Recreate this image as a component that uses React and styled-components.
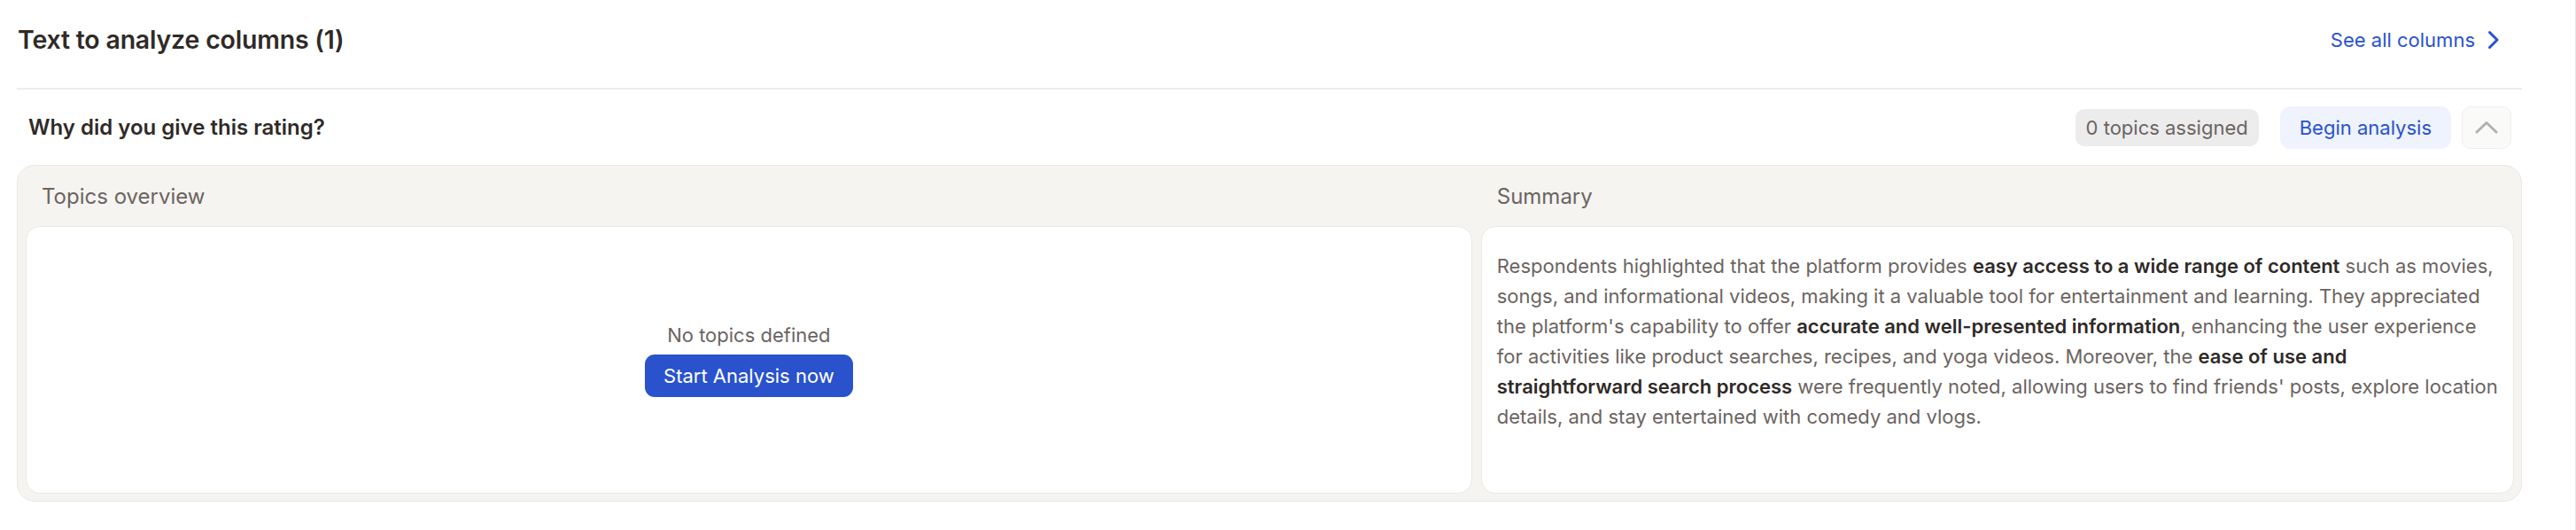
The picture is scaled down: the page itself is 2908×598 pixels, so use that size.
import React from "react";
import styled, { createGlobalStyle } from "styled-components";

const GlobalStyle = createGlobalStyle`
  body {
    margin: 0;
    background: #ffffff;
    font-family: Inter, "Noto Sans", sans-serif;
    color: #2f2a27;
  }
`;

const Page = styled.div`
  width: 2908px;
  height: 598px;
  box-sizing: border-box;
  padding: 0 60px 0 19px;
  border-right: 1px solid #e6e6e6;
`;

const Header = styled.div`
  height: 89px;
  padding: 0 25px 10px 1px;
  display: flex;
  align-items: center;
  justify-content: space-between;
  border-bottom: 2px solid #efece8;
`;

const Title = styled.h2`
  margin: 0;
  font-size: 28.5px;
  font-weight: 600;
  color: #2f2a27;
  letter-spacing: -0.2px;
`;

const LinkButton = styled.a`
  display: flex;
  align-items: center;
  gap: 14px;
  font-size: 22px;
  color: #2952cc;
  cursor: pointer;
`;

const QuestionRow = styled.div`
  height: 85px;
  padding: 0 12px 0 13px;
  display: flex;
  align-items: center;
  justify-content: space-between;
`;

const Question = styled.h3`
  margin: 0;
  font-size: 24px;
  font-weight: 600;
  color: #2f2a27;
`;

const Actions = styled.div`
  display: flex;
  align-items: center;
`;

const Badge = styled.span`
  height: 42px;
  padding: 0 12px;
  display: flex;
  align-items: center;
  border-radius: 10px;
  background: #ececec;
  color: #6b6461;
  font-size: 22px;
  margin-right: 24px;
`;

const SoftButton = styled.button`
  height: 48px;
  padding: 0 22px;
  border: none;
  border-radius: 12px;
  background: #eef3fd;
  color: #2952cc;
  font-family: inherit;
  font-size: 22px;
  margin-right: 12px;
  cursor: pointer;
`;

const IconButton = styled.button`
  width: 56px;
  height: 48px;
  display: flex;
  align-items: center;
  justify-content: center;
  box-sizing: border-box;
  border: 1px solid #f0efec;
  border-radius: 10px;
  background: #fafaf8;
  cursor: pointer;
`;

const Panel = styled.div`
  height: 380px;
  box-sizing: border-box;
  padding: 0 8px 8px 9px;
  background: #f5f4f1;
  border: 1px solid #ebe8e3;
  border-radius: 20px;
  display: grid;
  grid-template-columns: 7fr 5fr;
  grid-template-rows: 68px 1fr;
  column-gap: 10px;
`;

const ColumnLabel = styled.div`
  display: flex;
  align-items: center;
  padding-left: 18px;
  font-size: 24px;
  color: #6b6461;
`;

const Card = styled.div`
  background: #ffffff;
  border: 1px solid #ece9e4;
  border-radius: 16px;
  box-sizing: border-box;
  ${(p) =>
    p.$centered
      ? `display: flex;
         flex-direction: column;
         align-items: center;
         justify-content: center;
         gap: 9px;`
      : `padding: 27px 8px 27px 17px;`}
`;

const EmptyText = styled.p`
  margin: 0;
  font-size: 22px;
  color: #6b6461;
`;

const PrimaryButton = styled.button`
  height: 48px;
  padding: 0 21px;
  border: none;
  border-radius: 11px;
  background: #2952cc;
  color: #ffffff;
  font-family: inherit;
  font-size: 22px;
  cursor: pointer;
`;

const Summary = styled.p`
  margin: 0;
  font-size: 22px;
  line-height: 34px;
  color: #6b6461;

  strong {
    font-weight: 600;
    color: #2f2a27;
  }
`;

const ChevronRight = () => (
  <svg width="14" height="22" viewBox="0 0 14 22" fill="none">
    <path d="M2.5 2.5 L11 11 L2.5 19.5" stroke="#2952cc" strokeWidth="3" strokeLinecap="round" strokeLinejoin="round" />
  </svg>
);

const ChevronUp = () => (
  <svg width="26" height="15" viewBox="0 0 26 15" fill="none">
    <path d="M2 13 L13 2.5 L24 13" stroke="#b3b0ad" strokeWidth="3" strokeLinecap="round" strokeLinejoin="round" />
  </svg>
);

const App = () => {
  return (
    <Page>
      <GlobalStyle />
      <Header>
        <Title>Text to analyze columns (1)</Title>
        <LinkButton>
          See all columns
          <ChevronRight />
        </LinkButton>
      </Header>

      <QuestionRow>
        <Question>Why did you give this rating?</Question>
        <Actions>
          <Badge>0 topics assigned</Badge>
          <SoftButton>Begin analysis</SoftButton>
          <IconButton>
            <ChevronUp />
          </IconButton>
        </Actions>
      </QuestionRow>

      <Panel>
        <ColumnLabel>Topics overview</ColumnLabel>
        <ColumnLabel>Summary</ColumnLabel>
        <Card $centered>
          <EmptyText>No topics defined</EmptyText>
          <PrimaryButton>Start Analysis now</PrimaryButton>
        </Card>
        <Card>
          <Summary>
            Respondents highlighted that the platform provides <strong>easy access to a wide range of content</strong> such
            as movies, songs, and informational videos, making it a valuable tool for entertainment and learning. They
            appreciated the platform's capability to offer <strong>accurate and well-presented information</strong>,
            enhancing the user experience for activities like product searches, recipes, and yoga videos. Moreover, the{" "}
            <strong>
              ease of use and
              <br />
              straightforward search process
            </strong>{" "}
            were frequently noted, allowing users to find friends' posts, explore location details, and stay entertained
            with comedy and vlogs.
          </Summary>
        </Card>
      </Panel>
    </Page>
  );
};

export default App;
